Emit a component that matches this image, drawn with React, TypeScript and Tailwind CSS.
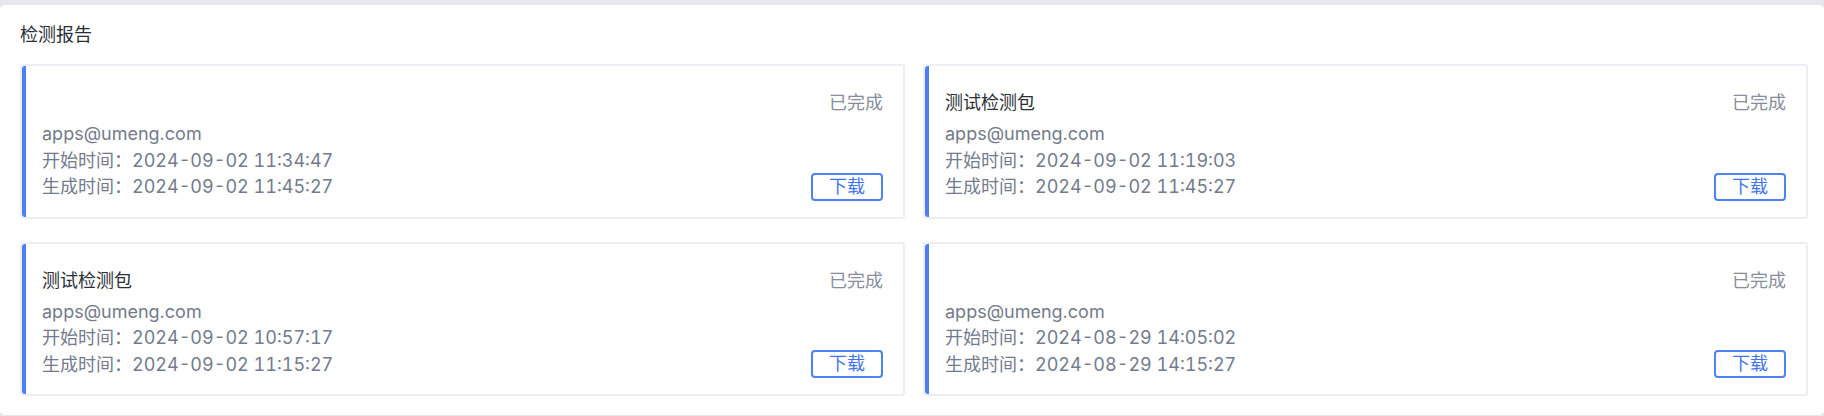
import React from "react";

type Report = {
  title: string;
  email: string;
  start: string;
  gen: string;
};

const reports: Report[] = [
  { title: "", email: "apps@umeng.com", start: "2024-09-02 11:34:47", gen: "2024-09-02 11:45:27" },
  { title: "测试检测包", email: "apps@umeng.com", start: "2024-09-02 11:19:03", gen: "2024-09-02 11:45:27" },
  { title: "测试检测包", email: "apps@umeng.com", start: "2024-09-02 10:57:17", gen: "2024-09-02 11:15:27" },
  { title: "", email: "apps@umeng.com", start: "2024-08-29 14:05:02", gen: "2024-08-29 14:15:27" },
];

function Card({ r }: { r: Report }) {
  return (
    <div className="flex rounded-[3px] border-2 border-[#eceef3] bg-white">
      <div className="flex flex-1 rounded-l-[3px] border-l-4 border-[#4c7ef5] pt-6 pb-[16px] pl-4 pr-5">
        <div className="flex flex-1 flex-col">
          <div className="h-[26px] text-[18px] leading-[26px] text-[#2b2f36]">{r.title}</div>
          <div className="mt-[5px] text-[18px] leading-[26.5px] text-[#737b8c]">
            <div>{r.email}</div>
            <div>
              开始时间：<span className="tabular-nums">{r.start}</span>
            </div>
            <div>
              生成时间：<span className="tabular-nums">{r.gen}</span>
            </div>
          </div>
        </div>
        <div className="flex flex-col items-end justify-between">
          <div className="text-[18px] leading-[26px] text-[#868d9c]">已完成</div>
          <button className="flex h-[28px] w-[72px] items-center justify-center rounded-[4px] border-2 border-[#4f82f5] text-[18px] leading-none text-[#3f74f2]">
            下载
          </button>
        </div>
      </div>
    </div>
  );
}

export default function App() {
  return (
    <div
      className="min-h-[416px] bg-[#e6e8ed] pt-[5px] pb-1"
      style={{ fontFamily: 'Inter, "Noto Sans CJK SC", sans-serif' }}
    >
      <div className="rounded-[5px] bg-white pt-[17px] pb-[19px] pl-5 pr-4">
        <div className="h-[26px] text-[18px] leading-[26px] text-[#2a2e35]">检测报告</div>
        <div className="mt-4 grid grid-cols-2 gap-x-[18px] gap-y-[23px]">
          {reports.map((r, i) => (
            <Card key={i} r={r} />
          ))}
        </div>
      </div>
    </div>
  );
}
